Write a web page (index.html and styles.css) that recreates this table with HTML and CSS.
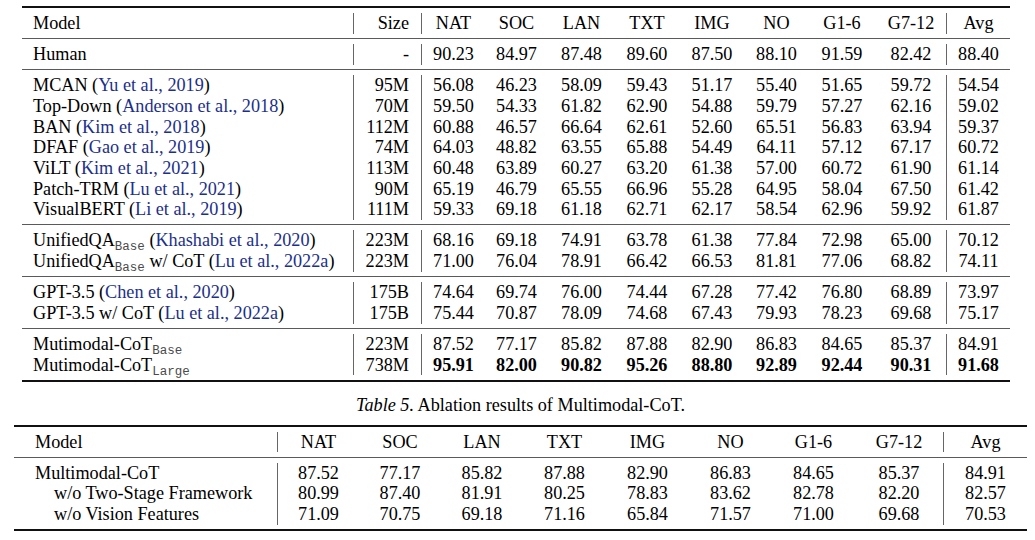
FILE: index.html
```html
<!DOCTYPE html>
<html lang="en">
<head>
<meta charset="utf-8">
<title>Results tables</title>
<link rel="stylesheet" href="styles.css">
</head>
<body>
<div class="page">
  <div class="tbl t1">
    <div class="grp head">
      <div class="row"><div class="c model">Model</div><div class="c size vl">Size</div><div class="c n vl">NAT</div><div class="c n">SOC</div><div class="c n">LAN</div><div class="c n">TXT</div><div class="c n">IMG</div><div class="c n">NO</div><div class="c n">G1-6</div><div class="c n">G7-12</div><div class="c n vl">Avg</div></div>
    </div>
    <div class="grp">
      <div class="row"><div class="c model">Human</div><div class="c size vl">-</div><div class="c n vl">90.23</div><div class="c n">84.97</div><div class="c n">87.48</div><div class="c n">89.60</div><div class="c n">87.50</div><div class="c n">88.10</div><div class="c n">91.59</div><div class="c n">82.42</div><div class="c n vl">88.40</div></div>
    </div>
    <div class="grp">
      <div class="row"><div class="c model">MCAN (<span class="cite">Yu et al., 2019</span>)</div><div class="c size vl">95M</div><div class="c n vl">56.08</div><div class="c n">46.23</div><div class="c n">58.09</div><div class="c n">59.43</div><div class="c n">51.17</div><div class="c n">55.40</div><div class="c n">51.65</div><div class="c n">59.72</div><div class="c n vl">54.54</div></div>
      <div class="row"><div class="c model">Top-Down (<span class="cite">Anderson et al., 2018</span>)</div><div class="c size vl">70M</div><div class="c n vl">59.50</div><div class="c n">54.33</div><div class="c n">61.82</div><div class="c n">62.90</div><div class="c n">54.88</div><div class="c n">59.79</div><div class="c n">57.27</div><div class="c n">62.16</div><div class="c n vl">59.02</div></div>
      <div class="row"><div class="c model">BAN (<span class="cite">Kim et al., 2018</span>)</div><div class="c size vl">112M</div><div class="c n vl">60.88</div><div class="c n">46.57</div><div class="c n">66.64</div><div class="c n">62.61</div><div class="c n">52.60</div><div class="c n">65.51</div><div class="c n">56.83</div><div class="c n">63.94</div><div class="c n vl">59.37</div></div>
      <div class="row"><div class="c model">DFAF (<span class="cite">Gao et al., 2019</span>)</div><div class="c size vl">74M</div><div class="c n vl">64.03</div><div class="c n">48.82</div><div class="c n">63.55</div><div class="c n">65.88</div><div class="c n">54.49</div><div class="c n">64.11</div><div class="c n">57.12</div><div class="c n">67.17</div><div class="c n vl">60.72</div></div>
      <div class="row"><div class="c model">ViLT (<span class="cite">Kim et al., 2021</span>)</div><div class="c size vl">113M</div><div class="c n vl">60.48</div><div class="c n">63.89</div><div class="c n">60.27</div><div class="c n">63.20</div><div class="c n">61.38</div><div class="c n">57.00</div><div class="c n">60.72</div><div class="c n">61.90</div><div class="c n vl">61.14</div></div>
      <div class="row"><div class="c model">Patch-TRM (<span class="cite">Lu et al., 2021</span>)</div><div class="c size vl">90M</div><div class="c n vl">65.19</div><div class="c n">46.79</div><div class="c n">65.55</div><div class="c n">66.96</div><div class="c n">55.28</div><div class="c n">64.95</div><div class="c n">58.04</div><div class="c n">67.50</div><div class="c n vl">61.42</div></div>
      <div class="row"><div class="c model">VisualBERT (<span class="cite">Li et al., 2019</span>)</div><div class="c size vl">111M</div><div class="c n vl">59.33</div><div class="c n">69.18</div><div class="c n">61.18</div><div class="c n">62.71</div><div class="c n">62.17</div><div class="c n">58.54</div><div class="c n">62.96</div><div class="c n">59.92</div><div class="c n vl">61.87</div></div>
    </div>
    <div class="grp">
      <div class="row"><div class="c model">UnifiedQA<sub class="tt">Base</sub> (<span class="cite">Khashabi et al., 2020</span>)</div><div class="c size vl">223M</div><div class="c n vl">68.16</div><div class="c n">69.18</div><div class="c n">74.91</div><div class="c n">63.78</div><div class="c n">61.38</div><div class="c n">77.84</div><div class="c n">72.98</div><div class="c n">65.00</div><div class="c n vl">70.12</div></div>
      <div class="row"><div class="c model">UnifiedQA<sub class="tt">Base</sub> w/ CoT (<span class="cite">Lu et al., 2022a</span>)</div><div class="c size vl">223M</div><div class="c n vl">71.00</div><div class="c n">76.04</div><div class="c n">78.91</div><div class="c n">66.42</div><div class="c n">66.53</div><div class="c n">81.81</div><div class="c n">77.06</div><div class="c n">68.82</div><div class="c n vl">74.11</div></div>
    </div>
    <div class="grp">
      <div class="row"><div class="c model">GPT-3.5 (<span class="cite">Chen et al., 2020</span>)</div><div class="c size vl">175B</div><div class="c n vl">74.64</div><div class="c n">69.74</div><div class="c n">76.00</div><div class="c n">74.44</div><div class="c n">67.28</div><div class="c n">77.42</div><div class="c n">76.80</div><div class="c n">68.89</div><div class="c n vl">73.97</div></div>
      <div class="row"><div class="c model">GPT-3.5 w/ CoT (<span class="cite">Lu et al., 2022a</span>)</div><div class="c size vl">175B</div><div class="c n vl">75.44</div><div class="c n">70.87</div><div class="c n">78.09</div><div class="c n">74.68</div><div class="c n">67.43</div><div class="c n">79.93</div><div class="c n">78.23</div><div class="c n">69.68</div><div class="c n vl">75.17</div></div>
    </div>
    <div class="grp last">
      <div class="row"><div class="c model">Mutimodal-CoT<sub class="tt">Base</sub></div><div class="c size vl">223M</div><div class="c n vl">87.52</div><div class="c n">77.17</div><div class="c n">85.82</div><div class="c n">87.88</div><div class="c n">82.90</div><div class="c n">86.83</div><div class="c n">84.65</div><div class="c n">85.37</div><div class="c n vl">84.91</div></div>
      <div class="row"><div class="c model">Mutimodal-CoT<sub class="tt">Large</sub></div><div class="c size vl">738M</div><div class="c n vl b">95.91</div><div class="c n b">82.00</div><div class="c n b">90.82</div><div class="c n b">95.26</div><div class="c n b">88.80</div><div class="c n b">92.89</div><div class="c n b">92.44</div><div class="c n b">90.31</div><div class="c n vl b">91.68</div></div>
    </div>
  </div>

  <div class="caption"><em>Table 5.</em> Ablation results of Multimodal-CoT.</div>

  <div class="tbl t2">
    <div class="grp head">
      <div class="row"><div class="c model">Model</div><div class="c n vl">NAT</div><div class="c n">SOC</div><div class="c n">LAN</div><div class="c n">TXT</div><div class="c n">IMG</div><div class="c n">NO</div><div class="c n">G1-6</div><div class="c n">G7-12</div><div class="c n vl">Avg</div></div>
    </div>
    <div class="grp last">
      <div class="row"><div class="c model">Multimodal-CoT</div><div class="c n vl">87.52</div><div class="c n">77.17</div><div class="c n">85.82</div><div class="c n">87.88</div><div class="c n">82.90</div><div class="c n">86.83</div><div class="c n">84.65</div><div class="c n">85.37</div><div class="c n vl">84.91</div></div>
      <div class="row"><div class="c model sub-item">w/o Two-Stage Framework</div><div class="c n vl">80.99</div><div class="c n">87.40</div><div class="c n">81.91</div><div class="c n">80.25</div><div class="c n">78.83</div><div class="c n">83.62</div><div class="c n">82.78</div><div class="c n">82.20</div><div class="c n vl">82.57</div></div>
      <div class="row"><div class="c model sub-item">w/o Vision Features</div><div class="c n vl">71.09</div><div class="c n">70.75</div><div class="c n">69.18</div><div class="c n">71.16</div><div class="c n">65.84</div><div class="c n">71.57</div><div class="c n">71.00</div><div class="c n">69.68</div><div class="c n vl">70.53</div></div>
    </div>
  </div>
</div>
</body>
</html>
```

FILE: styles.css
```css
html, body {
  margin: 0;
  padding: 0;
  background: #fff;
}

body {
  font-family: "Liberation Serif", "Times New Roman", serif;
  font-size: 18.2px;
  line-height: 20.67px;
  color: #000;
}

.page {
  width: 1035px;
  height: 540px;
  overflow: hidden;
  padding-top: 6px;
  box-sizing: border-box;
}

.tbl {
  border-top: 2px solid #111;
  border-bottom: 2px solid #111;
}

.t1 {
  margin-left: 22px;
  width: 988px;
}

.t1 .row {
  display: grid;
  grid-template-columns: 331px 68px 64px 63px 67px 64px 66px 63px 68px 70px 64px;
}

.t2 {
  margin-left: 14px;
  width: 1013px;
}

.t2 .row {
  display: grid;
  grid-template-columns: 263px 82px 82px 82px 83px 83px 83px 83px 88px 84px;
}

.grp {
  padding: 5px 0 4.5px;
  border-bottom: 1px solid #5a5a5a;
}

.grp.last {
  border-bottom: none;
}

.c {
  white-space: nowrap;
  height: 20.67px;
}

.model {
  padding-left: 11px;
}

.t2 .model {
  padding-left: 21px;
}

.t2 .model.sub-item {
  padding-left: 40px;
}

.size {
  text-align: right;
  padding-right: 12px;
}

.n {
  text-align: center;
}

.vl {
  border-left: 1px solid #666;
}

.b {
  font-weight: bold;
}

.cite {
  color: #1b2f8c;
}

.tt {
  font-family: "Liberation Mono", "Courier New", monospace;
  font-size: 12.5px;
  color: #4a4a4a;
  vertical-align: -4px;
  line-height: 0;
}

.caption {
  margin: 13px 0 9px 14px;
  width: 1013px;
  text-align: center;
}

.caption em {
  font-style: italic;
}
```
